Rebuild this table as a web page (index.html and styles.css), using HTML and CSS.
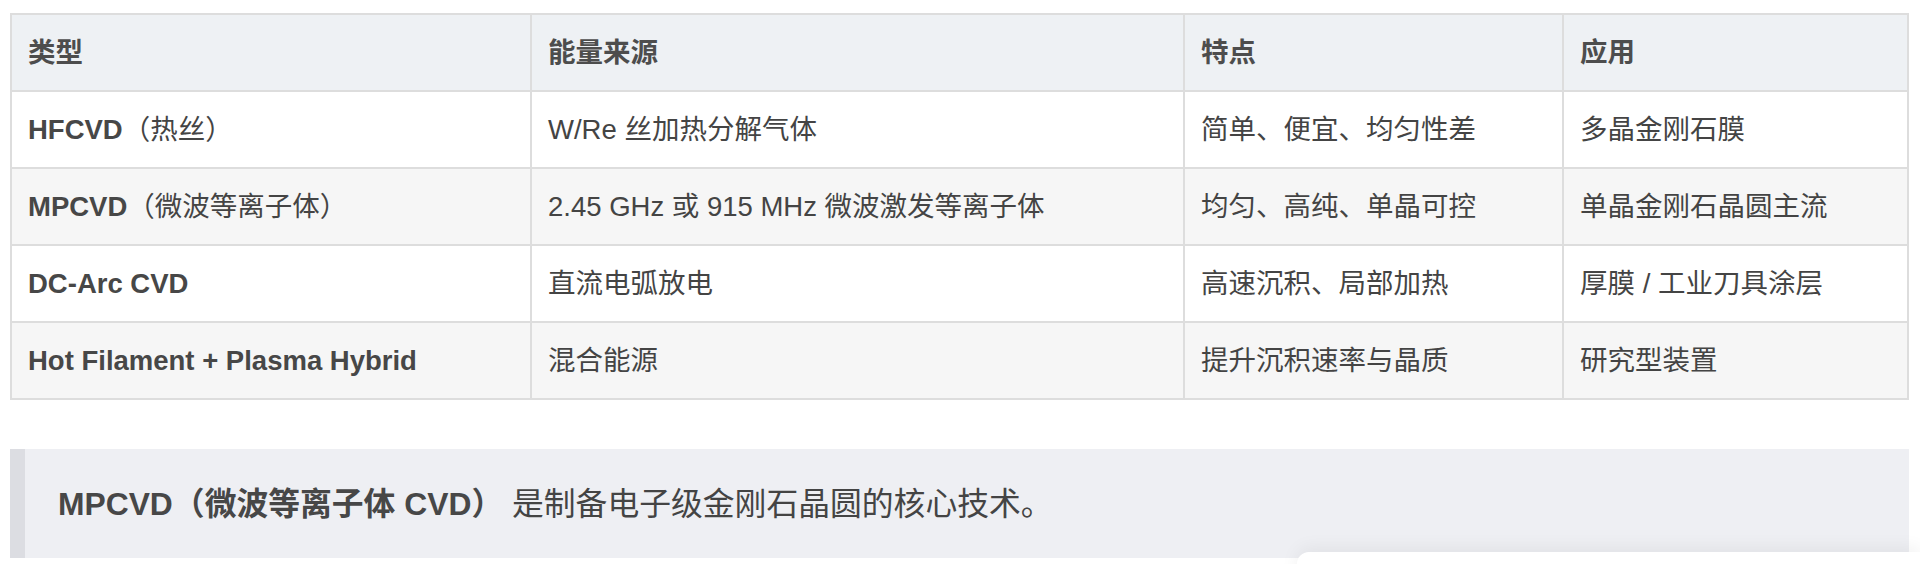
FILE: index.html
```html
<!DOCTYPE html>
<html lang="zh-CN">
<head>
<meta charset="utf-8">
<title>CVD 类型对比</title>
<link rel="stylesheet" href="styles.css">
</head>
<body>
<main class="page">
  <table class="cvd-table">
    <colgroup>
      <col class="c1"><col class="c2"><col class="c3"><col class="c4">
    </colgroup>
    <thead>
      <tr><th>类型</th><th>能量来源</th><th>特点</th><th>应用</th></tr>
    </thead>
    <tbody>
      <tr><td><strong>HFCVD</strong>（热丝）</td><td>W/Re 丝加热分解气体</td><td>简单、便宜、均匀性差</td><td>多晶金刚石膜</td></tr>
      <tr><td><strong>MPCVD</strong>（微波等离子体）</td><td>2.45 GHz 或 915 MHz 微波激发等离子体</td><td>均匀、高纯、单晶可控</td><td>单晶金刚石晶圆主流</td></tr>
      <tr><td><strong>DC-Arc CVD</strong></td><td>直流电弧放电</td><td>高速沉积、局部加热</td><td>厚膜 / 工业刀具涂层</td></tr>
      <tr><td><strong>Hot Filament + Plasma Hybrid</strong></td><td>混合能源</td><td>提升沉积速率与晶质</td><td>研究型装置</td></tr>
    </tbody>
  </table>
  <blockquote class="note">
    <p><strong>MPCVD（微波等离子体 CVD）</strong> 是制备电子级金刚石晶圆的核心技术。</p>
  </blockquote>
</main>
<div class="floating-panel"></div>
</body>
</html>
```

FILE: styles.css
```css
html, body {
  margin: 0;
  padding: 0;
  background: #ffffff;
}

body {
  font-family: "Liberation Sans", Arial, "Noto Sans CJK SC", sans-serif;
  color: #444444;
  overflow: hidden;
}

.page {
  padding: 13px 11px 0 10px;
}

.cvd-table {
  width: 100%;
  table-layout: fixed;
  border-collapse: collapse;
  font-size: 27.5px;
  border: 2px solid #dddddd;
}

.c1 { width: 520px; }
.c2 { width: 653px; }
.c3 { width: 379px; }
.c4 { width: auto; }

.cvd-table th,
.cvd-table td {
  height: 75px;
  padding: 0 16px;
  border: 2px solid #dddddd;
  text-align: left;
  vertical-align: middle;
  white-space: nowrap;
  line-height: 1.3;
}

.cvd-table th {
  background: #eef1f4;
  color: #4d4d4d;
  font-weight: 700;
}

.cvd-table td {
  color: #444444;
}

.cvd-table td strong {
  color: #474747;
  font-weight: 700;
}

.cvd-table tbody tr:nth-child(odd) td {
  background: #ffffff;
}

.cvd-table tbody tr:nth-child(even) td {
  background: #f6f6f6;
}

.note {
  margin: 49px 0 0 0;
  padding: 0 0 5px 33px;
  height: 109px;
  display: flex;
  align-items: center;
  background: #eeeff3;
  border-left: 15px solid #dcdde2;
  box-sizing: border-box;
}

.note p {
  margin: 0;
  font-size: 31.8px;
  color: #444444;
}

.note strong {
  font-weight: 700;
  color: #474747;
}

.floating-panel {
  position: fixed;
  left: 1297px;
  right: 0;
  top: 552px;
  height: 60px;
  background: #ffffff;
  border-top-left-radius: 12px;
  box-shadow: 0 -4px 18px rgba(0, 0, 0, 0.06);
}
```
